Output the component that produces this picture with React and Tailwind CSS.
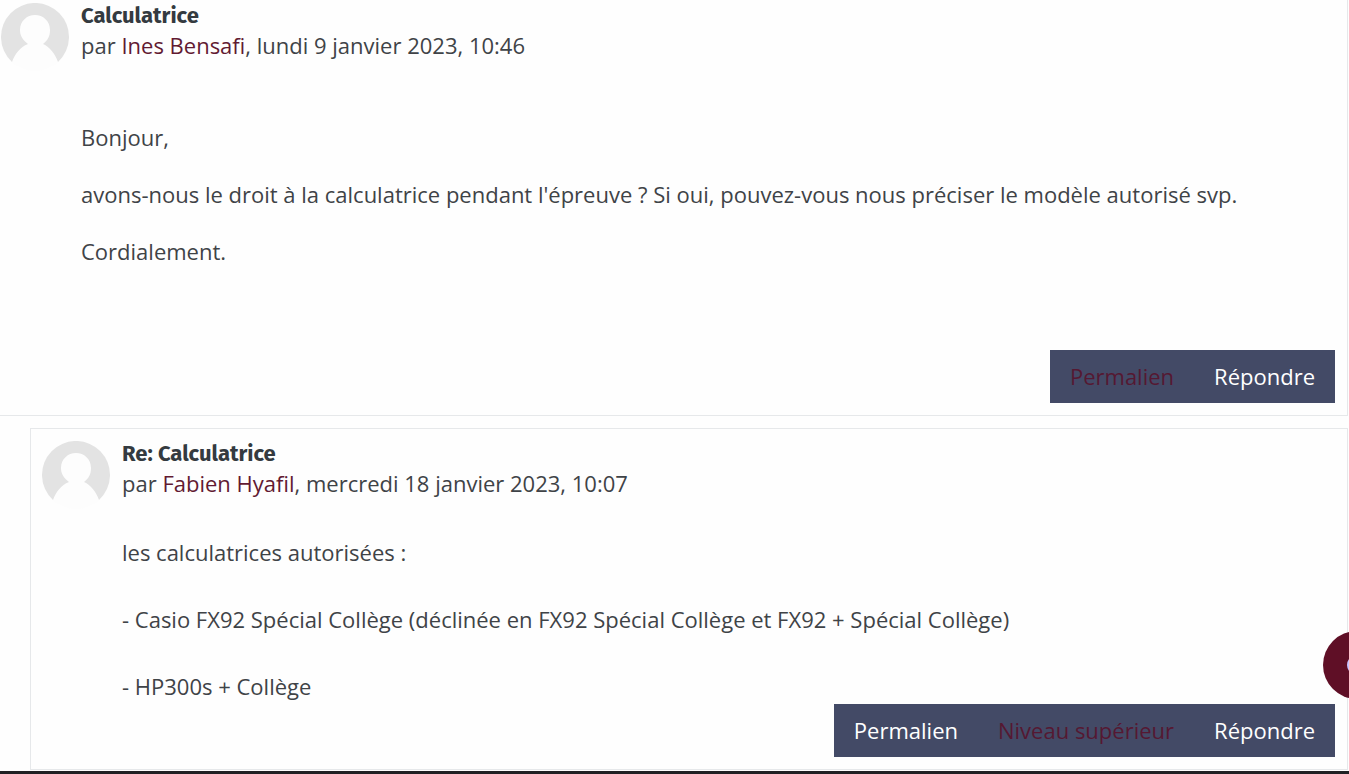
function Avatar() {
  return (
    <svg viewBox="0 0 68 68" className="mt-0.5 size-[68px] shrink-0" aria-hidden="true">
      <circle cx="34" cy="34" r="34" fill="#fdfdfd" />
      <path
        d="M11 59 A34 34 0 1 1 57 59 C54 51 49 44 42 41 C47 37 49 33 49 27 C49 18 42 12 34 12 C26 12 19 18 19 27 C19 33 22 37 27 41 C19 44 14 51 11 59 Z"
        fill="#e3e3e3"
      />
    </svg>
  );
}

function PostHeader({ title, author, date }) {
  return (
    <header className="flex gap-3">
      <Avatar />
      <div className="leading-7">
        <h3 className="font-['Fira_Sans','Roboto',sans-serif] text-[22px] leading-[30px] font-bold text-[#343a40]">{title}</h3>
        <div>
          par <a href="#profil" className="text-[#621a32]">{author}</a>, {date}
        </div>
      </div>
    </header>
  );
}

function PostActions({ items }) {
  return (
    <div className="flex justify-end">
      <nav className="flex bg-[#434a66]">
        {items.map((item) => (
          <a
            key={item.label}
            href="#message"
            className={`px-5 py-[9px] leading-[35px] ${item.active ? 'text-[#551832]' : 'text-white'}`}
          >
            {item.label}
          </a>
        ))}
      </nav>
    </div>
  );
}

export default function App() {
  return (
    <div className="relative overflow-hidden bg-[#fefefe] font-['Open_Sans',sans-serif] text-[22px] leading-[34px] text-[#3f4347]">
      <article className="mr-px border-r border-b border-[#e6e8ea] pt-px pr-3 pb-3 pl-px">
        <PostHeader title="Calculatrice" author="Ines Bensafi" date="lundi 9 janvier 2023, 10:46" />
        <div className="mt-[49px] mb-[82px] flex flex-col gap-[23px] pl-20">
          <p>Bonjour,</p>
          <p>
            avons-nous le droit à la calculatrice pendant l'épreuve ? Si oui, pouvez-vous nous préciser le modèle autorisé svp.
          </p>
          <p>Cordialement.</p>
        </div>
        <PostActions items={[{ label: 'Permalien', active: true }, { label: 'Répondre' }]} />
      </article>

      <article className="mt-3 mr-px ml-[30px] border border-[#e6e8ea] pt-2.5 pr-3 pb-3 pl-[11px]">
        <PostHeader title="Re: Calculatrice" author="Fabien Hyafil" date="mercredi 18 janvier 2023, 10:07" />
        <div className="mt-[26px] mb-px flex flex-col gap-[33px] pl-20">
          <p>les calculatrices autorisées :</p>
          <p>- Casio FX92 Spécial Collège (déclinée en FX92 Spécial Collège et FX92 + Spécial Collège)</p>
          <p>- HP300s + Collège</p>
        </div>
        <PostActions
          items={[{ label: 'Permalien' }, { label: 'Niveau supérieur', active: true }, { label: 'Répondre' }]}
        />
      </article>
      <footer className="mt-px h-[3px] bg-[#202124]" />

      {/* floating help button, partly off the right edge */}
      <button
        type="button"
        aria-label="Aide"
        className="absolute -right-[42px] bottom-[75px] flex size-[68px] items-center justify-center rounded-full bg-[#5f0f26]"
      >
        <svg viewBox="0 0 24 24" className="size-5" aria-hidden="true">
          <circle cx="12" cy="12" r="10" fill="none" stroke="#c9c4ff" strokeWidth="4" />
        </svg>
      </button>
    </div>
  );
}
